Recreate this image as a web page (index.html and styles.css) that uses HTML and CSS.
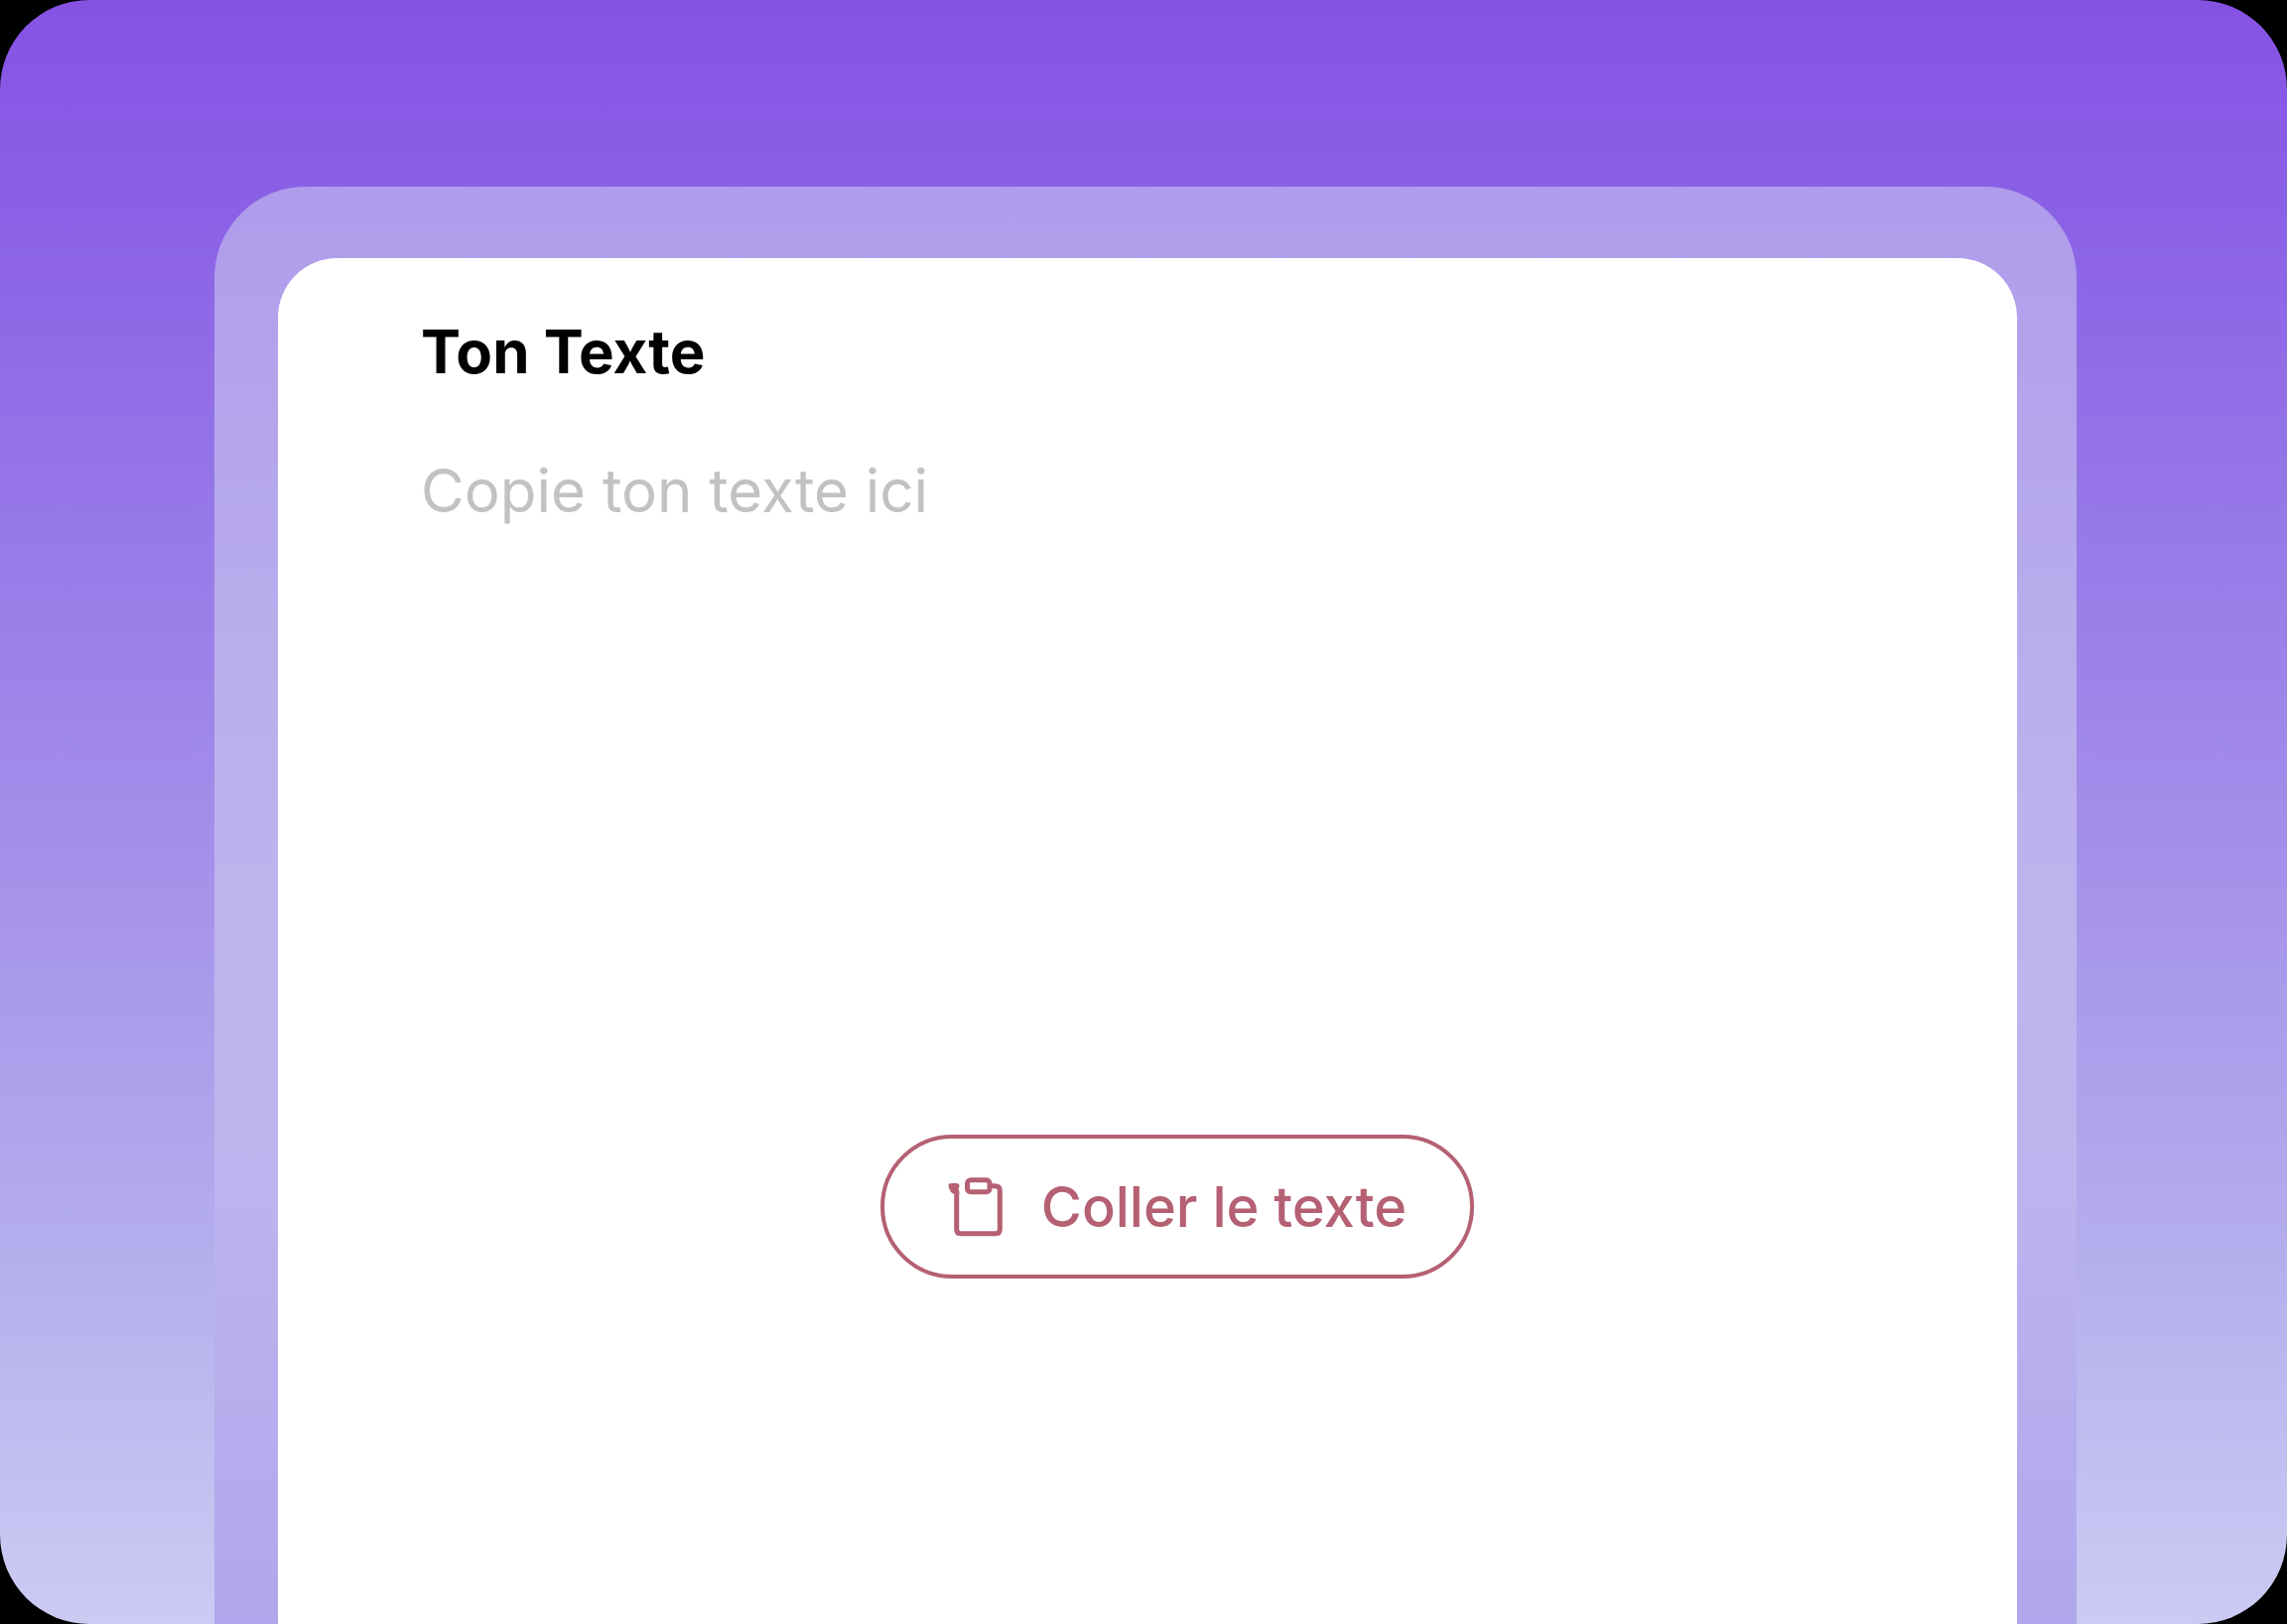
FILE: index.html
```html
<!DOCTYPE html>
<html lang="fr">
<head>
    <meta charset="UTF-8">
    <meta name="viewport" content="width=device-width, initial-scale=1.0">
    <title>Ton Texte</title>
    <link rel="stylesheet" href="styles.css">
</head>
<body>
    <main class="page">
        <div class="frame">
            <form class="card">
                <label class="card-title" for="texte">Ton Texte</label>
                <textarea class="text-field" id="texte" placeholder="Copie ton texte ici"></textarea>
                <button class="paste-btn" type="button">
                    <svg class="paste-icon" viewBox="16 14 56 62" aria-hidden="true">
                        <path class="blob" d="M16.500 22.500Q16.500 21 20 21L24.500 21Q27.500 21 27.500 23.500Q27.500 25 26.500 26L27.500 32H22Q18.500 30.500 17.500 27Q16.500 24.500 16.500 22.500Z"/>
                        <path d="M24.700 28V67.500Q24.700 71.800 29 71.800H64Q68.300 71.800 68.300 67.500V28.500Q68.300 23.700 63.500 23.700H58"/>
                        <rect x="35.500" y="17.800" width="22.500" height="12" rx="3.500"/>
                    </svg>
                    Coller le texte
                </button>
            </form>
        </div>
    </main>
</body>
</html>
```

FILE: styles.css
```css
:root {
    --rose: #b56073;
    --placeholder: #c2c2c2;
    --font-primary: 'Inter', sans-serif;
}

* {
    box-sizing: border-box;
}

body {
    margin: 0;
    background: #000;
    font-family: var(--font-primary);
}

.page {
    display: flex;
    min-height: 100vh;
    padding: 188px 212px 0 216px;
    border-radius: 90px;
    background: linear-gradient(180deg, #8652e4 0%, #8a60e6 12%, #b2aaec 74%, #cccbf3 100%);
}

.frame {
    display: flex;
    flex: 1;
    padding: 72px 60px 0 64px;
    border-radius: 92px 92px 0 0;
    background: linear-gradient(180deg, #af9ceb 0%, #baafec 35%, #beb5ee 55%, #bcb4ee 70%, #b0a7ec 100%);
}

.card {
    display: flex;
    flex: 1;
    flex-direction: column;
    padding: 56px 84px 348px 144px;
    border-radius: 60px 60px 0 0;
    background: #fff;
}

.card-title {
    font-size: 60px;
    font-weight: 700;
    line-height: 76px;
    color: #000;
}

.text-field {
    flex: 1;
    width: 100%;
    margin-top: 64px;
    padding: 0;
    border: none;
    outline: none;
    resize: none;
    background: none;
    font-family: inherit;
    font-size: 60px;
    line-height: 76px;
    color: #000;
}

.text-field::placeholder {
    color: var(--placeholder);
    opacity: 1;
}

.paste-btn {
    display: flex;
    align-items: center;
    align-self: center;
    gap: 38px;
    height: 145px;
    padding: 0 64px;
    border: 4px solid var(--rose);
    border-radius: 73px;
    background: #fff;
    color: var(--rose);
    font-family: inherit;
    font-size: 56px;
    font-weight: 500;
    cursor: pointer;
}

.paste-icon {
    width: 56px;
    height: 62px;
    fill: none;
    stroke: var(--rose);
    stroke-width: 5;
}

.paste-icon .blob {
    fill: var(--rose);
    stroke: none;
}
```
